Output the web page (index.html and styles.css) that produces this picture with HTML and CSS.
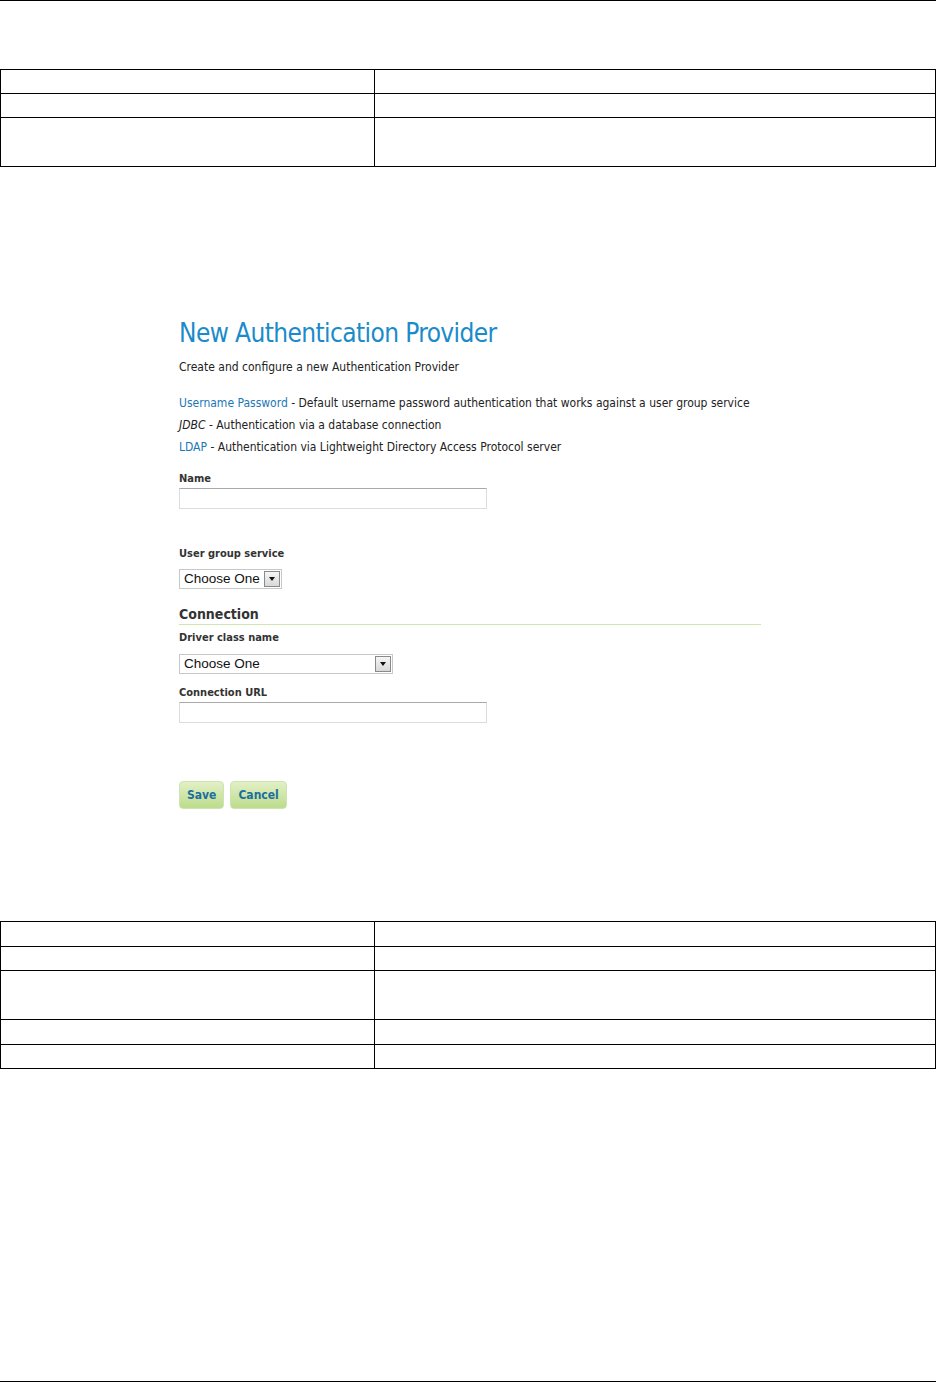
FILE: index.html
```html
<!DOCTYPE html>
<html>
  <head>
    <meta charset="utf-8">
    <meta name="viewport" content="width=device-width, initial-scale=1.0">
    <title>New Authentication Provider</title>
    <link rel="stylesheet" href="styles.css">
  </head>
  <body>
    <div class="page-rule"></div>

    <table class="grid grid-top">
      <tr class="row"><td class="col-a"></td><td></td></tr>
      <tr class="row"><td class="col-a"></td><td></td></tr>
      <tr class="row tall"><td class="col-a"></td><td></td></tr>
    </table>

    <div class="shot">
      <h1 class="title">New Authentication Provider</h1>
      <p class="intro">Create and configure a new Authentication Provider</p>

      <ul class="kinds">
        <li><a class="link">Username Password</a> - Default username password authentication that works against a user group service</li>
        <li><em>JDBC</em> - Authentication via a database connection</li>
        <li><a class="link">LDAP</a> - Authentication via Lightweight Directory Access Protocol server</li>
      </ul>

      <label class="field-label name-label">Name</label>
      <div class="text-input"></div>

      <label class="field-label gap-top">User group service</label>
      <div class="select select-short">
        <span class="select-text">Choose One</span>
        <span class="select-btn"><span class="caret"></span></span>
      </div>

      <h3 class="section">Connection</h3>

      <label class="field-label first">Driver class name</label>
      <div class="select select-long">
        <span class="select-text">Choose One</span>
        <span class="select-btn"><span class="caret"></span></span>
      </div>

      <label class="field-label url-label">Connection URL</label>
      <div class="text-input"></div>

      <div class="buttons">
        <button class="btn">Save</button>
        <button class="btn">Cancel</button>
      </div>
    </div>

    <table class="grid grid-bottom">
      <tr class="row wide"><td class="col-a"></td><td></td></tr>
      <tr class="row"><td class="col-a"></td><td></td></tr>
      <tr class="row tall"><td class="col-a"></td><td></td></tr>
      <tr class="row wide"><td class="col-a"></td><td></td></tr>
      <tr class="row"><td class="col-a"></td><td></td></tr>
    </table>

    <div class="page-foot"></div>
  </body>
</html>
```

FILE: styles.css
```css
html, body {
  margin: 0;
  padding: 0;
  background: #fff;
  color: #222;
  font-family: "DejaVu Sans Condensed", "DejaVu Sans", sans-serif;
}
.page-rule {
  height: 1px;
  background: #000;
}
.grid {
  width: 936px;
  border-collapse: collapse;
}
.grid td {
  border: 1px solid #000;
  padding: 0;
  height: 23px;
}
.grid .wide td {
  height: 24px;
}
.grid .tall td {
  height: 48px;
}
.grid .col-a {
  width: 373px;
}
.grid-top {
  margin-top: 68px;
}
.grid-bottom {
  margin-top: 112px;
}
.shot {
  padding: 151px 0 0 179px;
  width: 582px;
}
.title {
  margin: 0;
  font-size: 26px;
  font-weight: normal;
  color: #1b8bca;
  line-height: 30px;
  letter-spacing: -0.6px;
}
.intro {
  margin: 11px 0 0;
  font-size: 12px;
  line-height: 16px;
  color: #222;
}
.kinds {
  list-style: none;
  margin: 17px 0 0;
  padding: 0;
  font-size: 12px;
}
.kinds li {
  line-height: 22px;
}
.link {
  color: #1a78b6;
}
.kinds em {
  font-style: italic;
}
.field-label {
  display: block;
  margin-top: 8px;
  font-size: 11px;
  font-weight: bold;
  color: #333;
  line-height: 16px;
}
.field-label.name-label {
  margin-top: 13px;
}
.field-label.gap-top {
  margin-top: 37px;
}
.field-label.first {
  margin-top: 5px;
}
.field-label.url-label {
  margin-top: 11px;
}
.text-input {
  margin-top: 1px;
  width: 306px;
  height: 19px;
  border: 1px solid #dcdcdc;
  border-top-color: #a9a9a9;
}
.select {
  display: flex;
  align-items: center;
  margin-top: 7px;
  height: 18px;
  border: 1px solid #c8c8c8;
  font-family: "Liberation Sans", Arial, sans-serif;
  font-size: 13.5px;
  color: #111;
}
.select-long {
  margin-top: 8px;
  width: 212px;
}
.select-short {
  width: 101px;
}
.select-text {
  flex: 1;
  padding-left: 4px;
  line-height: 18px;
}
.select-btn {
  width: 16px;
  height: 16px;
  margin-right: 1px;
  border: 1px solid #8a8a8a;
  box-sizing: border-box;
  background: linear-gradient(#f6f6f6, #d8d8d8);
  display: flex;
  align-items: center;
  justify-content: center;
}
.caret {
  width: 0;
  height: 0;
  border-left: 3px solid transparent;
  border-right: 3px solid transparent;
  border-top: 4px solid #111;
}
.section {
  margin: 16px 0 0;
  font-size: 14px;
  font-weight: bold;
  color: #333;
  line-height: 18px;
  padding-bottom: 1px;
  border-bottom: 1px solid #cfe6b0;
}
.buttons {
  display: flex;
  gap: 6px;
  margin-top: 58px;
}
.btn {
  height: 28px;
  padding: 0 7px;
  border: 1px solid #cfe3ae;
  border-radius: 4px;
  background: linear-gradient(#e2f0c6, #bcdc8c);
  color: #1d6e9e;
  font-family: "DejaVu Sans Condensed", "DejaVu Sans", sans-serif;
  font-size: 12px;
  font-weight: bold;
  cursor: pointer;
}
.page-foot {
  margin-top: 312px;
  height: 1px;
  background: #000;
}
```
